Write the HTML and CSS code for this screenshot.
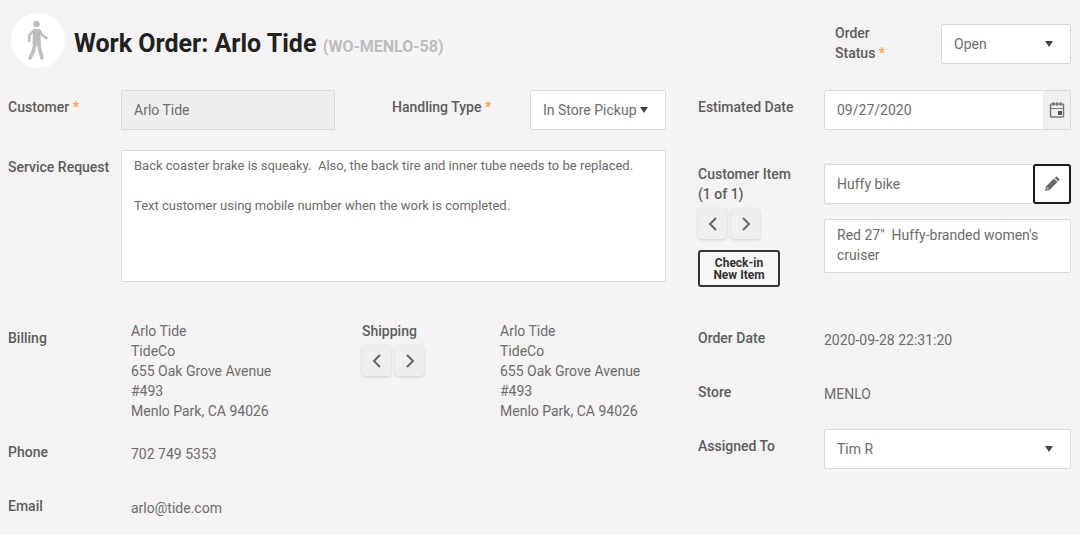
FILE: index.html
```html
<!DOCTYPE html>
<html lang="en">
  <head>
    <meta charset="utf-8">
    <title>Work Order: Arlo Tide</title>
    <link rel="stylesheet" href="styles.css">
  </head>
  <body>

    <form class="work-order">
      <div class="header">
        <div class="avatar">
          <svg width="54" height="56" viewBox="0 0 54 56" fill="none" stroke="#bdbdbd" stroke-linecap="round" stroke-linejoin="round">
            <circle cx="25.500" cy="11" r="3.200" fill="#bdbdbd" stroke="none"/>
            <path d="M23 17h5l1 14h-6.500z" fill="#bdbdbd" stroke-width="2"/>
            <path d="M22.500 17.500l-4 4.500-.5 6" stroke-width="2.500"/>
            <path d="M28.500 17.500l2.500 4.500 4.500 3" stroke-width="2.500"/>
            <path d="M24 31l-2 8-3 6M27.500 31l2 8 1.500 6" stroke-width="3.600"/>
          </svg>
        </div>
        <h1>Work Order: Arlo Tide <span class="order-id">(WO-MENLO-58)</span></h1>
        <label class="status-label" for="status">Order Status <span class="required">*</span></label>
        <div class="select status">
          <select id="status"><option>Open</option></select>
        </div>
      </div>

      <div class="columns">
        <div class="main">
          <div class="row">
            <label for="customer">Customer <span class="required">*</span></label>
            <input class="box customer" id="customer" type="text" value="Arlo Tide" readonly>
            <label class="handling-label" for="handling">Handling Type <span class="required">*</span></label>
            <div class="select handling">
              <select id="handling"><option>In Store Pickup</option></select>
            </div>
          </div>

          <div class="row request">
            <label for="request">Service Request</label>
            <textarea class="box" id="request">Back coaster brake is squeaky.  Also, the back tire and inner tube needs to be replaced.

Text customer using mobile number when the work is completed.</textarea>
          </div>

          <div class="row addresses">
            <div class="label">Billing</div>
            <div class="address billing">
              Arlo Tide<br>
              TideCo<br>
              655 Oak Grove Avenue<br>
              #493<br>
              Menlo Park, CA 94026
            </div>
            <div class="shipping">
              <div class="shipping-title">Shipping</div>
              <div class="pager">
                <button type="button" aria-label="Previous address"><svg width="10" height="14" viewBox="0 0 10 14"><path d="M8 1L2 7l6 6"/></svg></button>
                <button type="button" aria-label="Next address"><svg width="10" height="14" viewBox="0 0 10 14"><path d="M2 1l6 6-6 6"/></svg></button>
              </div>
            </div>
            <div class="address">
              Arlo Tide<br>
              TideCo<br>
              655 Oak Grove Avenue<br>
              #493<br>
              Menlo Park, CA 94026
            </div>
          </div>

          <div class="row">
            <div class="label">Phone</div>
            <div class="value indent">702 749 5353</div>
          </div>

          <div class="row">
            <div class="label">Email</div>
            <div class="value indent">arlo@tide.com</div>
          </div>
        </div>

        <div class="side">
          <div class="row">
            <label for="date">Estimated Date</label>
            <div class="box date">
              <input id="date" type="text" value="09/27/2020">
              <button type="button" aria-label="Pick a date">
                <svg width="16" height="18" viewBox="0 0 16 18" fill="none" stroke="#777">
                  <rect x="1.500" y="3" width="13" height="13" rx="1" stroke-width="1.500"/>
                  <path d="M1.500 7.500h13"/>
                  <path d="M4.500 1v4M8 1v4M11.500 1v4" stroke-width="1.500"/>
                  <path d="M9 10h4v4H9z" fill="#555" stroke="none"/>
                </svg>
              </button>
            </div>
          </div>

          <div class="row item">
            <div class="item-label">
              <label for="item">Customer Item<br>(1 of 1)</label>
              <div class="pager">
                <button type="button" aria-label="Previous item"><svg width="10" height="14" viewBox="0 0 10 14"><path d="M8 1L2 7l6 6"/></svg></button>
                <button type="button" aria-label="Next item"><svg width="10" height="14" viewBox="0 0 10 14"><path d="M2 1l6 6-6 6"/></svg></button>
              </div>
              <button type="button" class="check-in">Check-in<br>New Item</button>
            </div>
            <div class="item-fields">
              <div class="item-name">
                <input class="box" id="item" type="text" value="Huffy bike">
                <button type="button" class="edit" aria-label="Edit item">
                  <svg width="16" height="16" viewBox="0 0 16 16" fill="#666">
                    <path d="M1 15l1-4.500 8-8 3.500 3.500-8 8z"/>
                    <path d="M10.700 1.800l.9-.9q.8-.7 1.600 0l1.900 1.900q.7.800 0 1.600l-.9.900z"/>
                    <path d="M10 2.500l3.500 3.500M2.500 13.500l1-2.500 1.500 1.500z" stroke="#ccc" stroke-width=".6"/>
                  </svg>
                </button>
              </div>
              <textarea class="box" aria-label="Item description">Red 27"  Huffy-branded women's cruiser</textarea>
            </div>
          </div>

          <div class="row">
            <div class="label">Order Date</div>
            <div class="value">2020-09-28 22:31:20</div>
          </div>

          <div class="row">
            <div class="label">Store</div>
            <div class="value">MENLO</div>
          </div>

          <div class="row">
            <label for="assigned">Assigned To</label>
            <div class="select">
              <select id="assigned"><option>Tim R</option></select>
            </div>
          </div>
        </div>
      </div>
    </form>

  </body>
</html>
```
FILE: styles.css
```css
* {
  box-sizing: border-box;
}

body {
  margin: 0;
  background-color: #f5f3f4;
  color: #6c6c6c;
  font: 14px/20px Roboto, sans-serif;
}

input, select, textarea, button {
  font: inherit;
  color: inherit;
  margin: 0;
}

button {
  display: flex;
  align-items: center;
  justify-content: center;
  padding: 0;
}

.work-order {
  padding: 13px 9px 6px 8px;
}

/* header */

.header {
  display: flex;
  align-items: center;
  margin-bottom: 22px;
}

.avatar {
  flex: none;
  width: 54px;
  height: 55px;
  margin: 0 9px 0 3px;
  border-radius: 50%;
  background-color: white;
}

h1 {
  flex: 1;
  margin: 0;
  padding-top: 10px;
  color: #212121;
  font-size: 25px;
  font-weight: bold;
  line-height: 32px;
}

.order-id {
  color: #bdbdbd;
  font-size: 16px;
}

.status-label {
  width: 106px;
  padding: 5px 50px 0 0;
}

.status {
  flex: none;
  width: 130px;
  margin-top: 7px;
}

label, .label, .shipping-title {
  color: #5c5c5c;
  font-weight: 500;
}

.required {
  color: #f9a14a;
}

/* form layout */

.columns {
  display: flex;
  gap: 32px;
}

.main {
  flex: 1;
  min-width: 0;
}

.side {
  flex: none;
  width: 373px;
}

.row {
  display: flex;
  min-height: 40px;
  margin-bottom: 14px;
}

.row > label, .row > .label {
  flex: none;
  width: 113px;
  padding-top: 7px;
}

.side .row > label, .side .row > .label, .item-label {
  flex: none;
  width: 126px;
}

.value {
  padding-top: 9px;
}

.indent {
  padding-left: 10px;
}

/* fields */

.box, .select {
  flex: 1;
  min-width: 0;
  height: 40px;
  border: 1px solid #d9d9d9;
  border-radius: 2px;
  background-color: white;
}

input.box, .date input {
  padding: 0 12px;
}

textarea.box {
  display: block;
  padding: 5px 12px;
  resize: none;
  overflow: hidden;
}

.row .customer {
  flex: none;
  width: 214px;
  background-color: #eee;
}

.row > .handling-label {
  flex: 1;
  padding-left: 57px;
}

.select {
  position: relative;
}

.select.handling {
  flex: none;
  width: 136px;
}

.select.status {
  flex: none;
}

.select select {
  appearance: none;
  width: 100%;
  height: 100%;
  padding: 0 12px;
  border: 0;
  background: none;
}

.select::after {
  content: "";
  position: absolute;
  top: 16px;
  right: 17px;
  border: solid transparent;
  border-width: 6px 4px 0;
  border-top-color: #444;
  pointer-events: none;
}

.request {
  margin: 20px 0 39px;
}

.request textarea {
  height: 132px;
  font-size: 13px;
}

.addresses {
  margin-bottom: 14px;
}

.billing {
  flex: none;
  width: 241px;
  padding-left: 10px;
}

.shipping {
  flex: none;
  width: 138px;
}

/* buttons */

.pager {
  display: flex;
  gap: 4px;
  margin-top: 4px;
}

.pager button {
  width: 29px;
  height: 31px;
  border: 0;
  border-radius: 4px;
  background-color: #efefef;
  box-shadow: 0 1px 3px rgba(0, 0, 0, .15);
}

.pager path {
  fill: none;
  stroke: #666;
  stroke-width: 2;
}

.check-in {
  width: 82px;
  height: 37px;
  margin-top: 11px;
  border: 2px solid #333;
  border-radius: 3px;
  background-color: #f7f7f7;
  color: #333;
  font-size: 12px;
  font-weight: bold;
  line-height: 12px;
}

.date {
  display: flex;
}

.date input {
  flex: 1;
  min-width: 0;
  border: 0;
  background: none;
}

.date button {
  width: 27px;
  border: 0;
  background-color: #f0f0f0;
}

.item {
  margin: 34px 0;
}

.item-label label {
  display: block;
}

.item-fields {
  flex: 1;
  min-width: 0;
}

.item-name {
  display: flex;
  margin-bottom: 15px;
}

.item-name .box {
  border-right: 0;
  border-radius: 2px 0 0 2px;
}

.edit {
  width: 38px;
  height: 40px;
  border: 2px solid #1a1a1a;
  border-radius: 3px;
  background-color: white;
}

.item-fields textarea {
  width: 100%;
  height: 54px;
}
```
